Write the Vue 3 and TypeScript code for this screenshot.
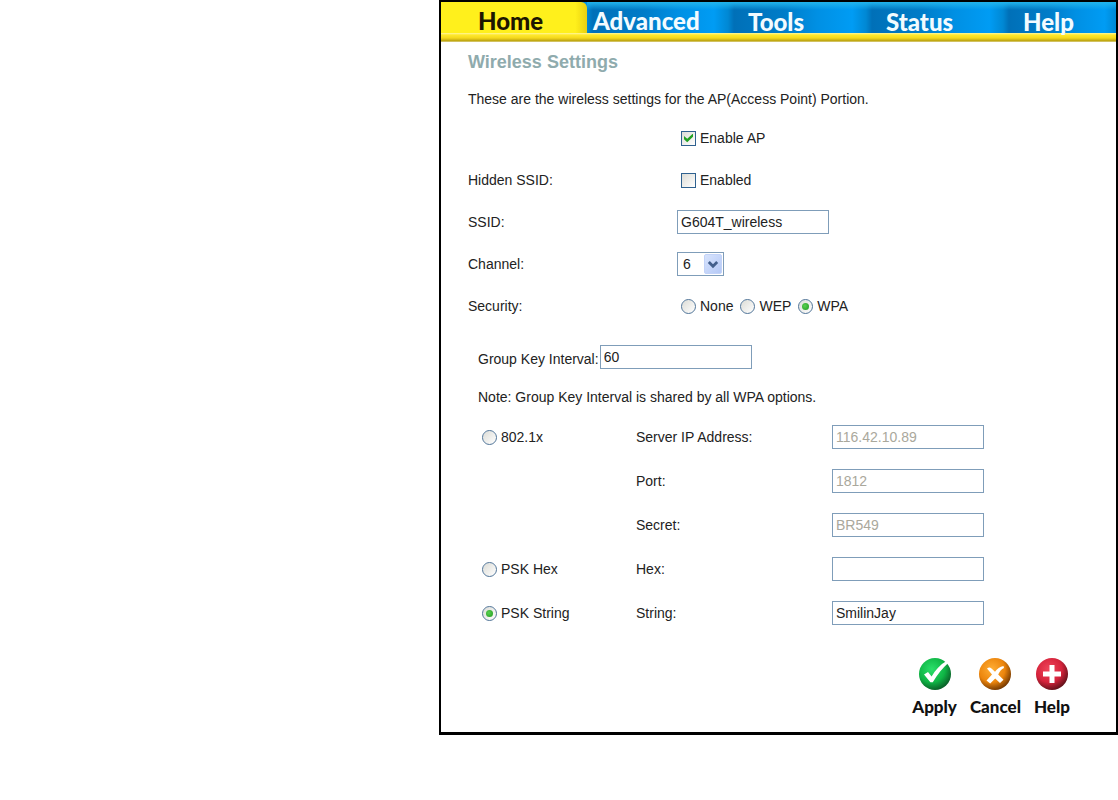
<script setup lang="ts">
import { ref } from 'vue'

interface ServerField {
  id: string
  label: string
  value: string
  mode: string
  option?: string
}

const tabs = ['Home', 'Advanced', 'Tools', 'Status', 'Help']
const enableAp = ref(true)
const hiddenSsid = ref(false)
const ssid = ref('G604T_wireless')
const channel = ref('6')
const channels = ['1', '2', '3', '4', '5', '6', '7', '8', '9', '10', '11']
const security = ref('WPA')
const securityModes = ['None', 'WEP', 'WPA']
const interval = ref('60')
const wpaMode = ref('string')
const fields = ref<ServerField[]>([
  { id: 'server', label: 'Server IP Address:', value: '116.42.10.89', mode: '8021x', option: '802.1x' },
  { id: 'port', label: 'Port:', value: '1812', mode: '8021x' },
  { id: 'secret', label: 'Secret:', value: 'BR549', mode: '8021x' },
  { id: 'hex', label: 'Hex:', value: '', mode: 'hex', option: 'PSK Hex' },
  { id: 'string', label: 'String:', value: 'SmilinJay', mode: 'string', option: 'PSK String' },
])
</script>

<template>
  <div class="page">
    <main class="panel">
      <nav class="tabs">
        <a v-for="(tab, i) in tabs" :key="tab" href="#" class="tab" :class="{ active: i === 0, next: i === 1 }">{{ tab }}</a>
      </nav>
      <div class="band"></div>
      <form class="content" @submit.prevent>
        <h1>Wireless Settings</h1>
        <p class="intro">These are the wireless settings for the AP(Access Point) Portion.</p>

        <div class="row">
          <span></span>
          <label class="choice"><input v-model="enableAp" type="checkbox" />Enable AP</label>
        </div>
        <div class="row">
          <span>Hidden SSID:</span>
          <label class="choice"><input v-model="hiddenSsid" type="checkbox" />Enabled</label>
        </div>
        <div class="row">
          <label for="ssid">SSID:</label>
          <input id="ssid" v-model="ssid" class="text" type="text" />
        </div>
        <div class="row">
          <label for="channel">Channel:</label>
          <div class="drop">
            <select id="channel" v-model="channel">
              <option v-for="c in channels" :key="c">{{ c }}</option>
            </select>
            <svg viewBox="0 0 18 20" width="18" height="20" aria-hidden="true">
              <defs>
                <linearGradient id="arrowFill" x1="0" y1="0" x2="1" y2="1">
                  <stop offset="0" stop-color="#d8e4fd" />
                  <stop offset="1" stop-color="#b4c8f6" />
                </linearGradient>
              </defs>
              <rect x="0.5" y="0.5" width="17" height="19" rx="1.5" fill="url(#arrowFill)" stroke="#c3d3f8" />
              <path d="M4.8 8l4.2 4.2L13.2 8" fill="none" stroke="#435f8c" stroke-width="2.8" />
            </svg>
          </div>
        </div>
        <div class="row">
          <span>Security:</span>
          <div class="modes">
            <label v-for="m in securityModes" :key="m" class="choice">
              <input v-model="security" type="radio" name="security" :value="m" />{{ m }}
            </label>
          </div>
        </div>

        <section class="wpa">
          <div class="interval">
            <label for="interval">Group Key Interval:</label>
            <input id="interval" v-model="interval" class="text" type="text" />
          </div>
          <p class="note">Note: Group Key Interval is shared by all WPA options.</p>
          <div v-for="f in fields" :key="f.id" class="wpa-row">
            <label v-if="f.option" class="choice">
              <input v-model="wpaMode" type="radio" name="wpa" :value="f.mode" />{{ f.option }}
            </label>
            <span v-else></span>
            <label :for="f.id">{{ f.label }}</label>
            <input :id="f.id" v-model="f.value" class="text" type="text" :disabled="f.mode === '8021x' && wpaMode !== '8021x'" />
          </div>
        </section>

        <div class="actions">
          <button type="submit">
            <svg viewBox="0 0 34 34" width="34" height="34" aria-hidden="true">
              <defs>
                <radialGradient id="green" cx="0.4" cy="0.35" r="0.68">
                  <stop offset="0" stop-color="#2be06a" />
                  <stop offset="0.6" stop-color="#0fb545" />
                  <stop offset="1" stop-color="#0a5a26" />
                </radialGradient>
              </defs>
              <circle cx="17" cy="17" r="16" fill="url(#green)" />
              <path d="M6 17.5l4-2.600 3.600 4.600C17.500 13 22 7.500 28.500 4l2 1.800C25 10.500 19.500 17.500 14.800 25.200h-2.400z" fill="#fff" />
            </svg>
            Apply
          </button>
          <button type="button">
            <svg viewBox="0 0 34 34" width="34" height="34" aria-hidden="true">
              <defs>
                <radialGradient id="orange" cx="0.4" cy="0.35" r="0.68">
                  <stop offset="0" stop-color="#ffae35" />
                  <stop offset="0.6" stop-color="#ec850c" />
                  <stop offset="1" stop-color="#6f3500" />
                </radialGradient>
              </defs>
              <circle cx="17" cy="17" r="16" fill="url(#orange)" />
              <path d="M9 11.500q2.500-2 4.500 0l3.500 3.300c2-3 5-5.300 8.500-5.800l.5 2c-2.500 1.200-4.500 3.500-5.800 6.500l5.300 5.200-3.500 3.300-4.800-4.500-5 5-3.700-3 5.500-6z" fill="#fff" />
            </svg>
            Cancel
          </button>
          <button type="button">
            <svg viewBox="0 0 34 34" width="34" height="34" aria-hidden="true">
              <defs>
                <radialGradient id="red" cx="0.4" cy="0.35" r="0.68">
                  <stop offset="0" stop-color="#f0455a" />
                  <stop offset="0.6" stop-color="#d5233b" />
                  <stop offset="1" stop-color="#5c1018" />
                </radialGradient>
              </defs>
              <circle cx="17" cy="17" r="16" fill="url(#red)" />
              <path d="M14.500 8h5v6.500H26v5h-6.500V26h-5v-6.500H8v-5h6.500z" fill="#fff" />
            </svg>
            Help
          </button>
        </div>
      </form>
    </main>
  </div>
</template>

<style>
body {
  background: #fff;
}
</style>

<style scoped>
* {
  box-sizing: border-box;
}
.page {
  display: grid;
  grid-template-columns: 439px minmax(0, 1fr);
  font: 14px/20px "Liberation Sans", Arial, sans-serif;
  color: #222;
}
.panel {
  grid-column: 2;
  border: 2px solid #000;
  border-bottom-width: 3px;
}
.tabs {
  display: grid;
  grid-template-columns: 146fr 141fr 138fr 137fr 113fr;
  background: #0092e4;
}
.tab {
  height: 31px;
  padding: 6px 0 0 20px;
  font: 900 24px/28px Lato, "Open Sans", sans-serif;
  color: #f2fbff;
  text-decoration: none;
  background:
    linear-gradient(#22b4ec, #22b4ec00 8px),
    linear-gradient(90deg, #0088d4, #0070b8 6px, #007cc8 40%, #0090e4 65%, #009cf4 90%, #0088d4);
}
.tab.next {
  padding: 5px 0 0 6px;
}
.tab.active {
  padding: 5px 0 0 37px;
  color: #1c1600;
  background: linear-gradient(90deg, #fff01c 92%, #e8d010);
  border-top-right-radius: 6px;
}
.band {
  height: 9px;
  background: linear-gradient(#fff6a0, #ffe92c 2px, #f4d81c 5px, #b9a010 8px, #e9e3b0);
}
.content {
  padding: 0 27px 15px;
}
h1 {
  margin: 0;
  font-size: 18px;
  line-height: 40px;
  color: #8fabad;
}
p {
  margin: 0;
}
.intro {
  line-height: 35px;
}
.row {
  display: grid;
  grid-template-columns: 209px 1fr;
  align-items: center;
  height: 42px;
}
.choice {
  display: flex;
  align-items: center;
  gap: 4px;
  margin-left: 4px;
}
.modes {
  display: flex;
  gap: 3px;
}
.text {
  width: 152px;
  height: 24px;
  padding: 0 3px;
  border: 1px solid #7f9db9;
  background: #fff;
  font: inherit;
  color: #222;
}
.text:disabled {
  color: #aaa89c;
}
input[type="checkbox"],
input[type="radio"] {
  appearance: none;
  display: grid;
  place-items: center;
  flex: none;
  width: 15px;
  height: 15px;
  margin: 0;
  border: 1px solid #2f618f;
  background: linear-gradient(135deg, #dcdcd6, #fff) padding-box;
}
input[type="radio"] {
  border-color: #4f7396;
  border-radius: 50%;
}
input[type="checkbox"]:checked::before {
  content: "";
  width: 9px;
  height: 9px;
  background: #22a122;
  clip-path: polygon(0 28%, 36% 58%, 100% 0, 100% 36%, 36% 96%, 0 64%);
}
input[type="radio"]:checked::before {
  content: "";
  width: 7px;
  height: 7px;
  border-radius: 50%;
  background: radial-gradient(circle at 40% 40%, #5ad050, #1f9a1f);
}
.drop {
  position: relative;
  width: 47px;
  height: 24px;
}
.drop select {
  appearance: none;
  width: 100%;
  height: 100%;
  padding: 0 5px;
  border: 1px solid #7f9db9;
  border-radius: 0;
  background: #fff;
  font: inherit;
  color: #222;
}
.drop svg {
  position: absolute;
  top: 2px;
  right: 2px;
  pointer-events: none;
}
.wpa {
  padding-left: 10px;
}
.interval {
  display: flex;
  align-items: center;
  gap: 1px;
  height: 60px;
}
.interval label {
  padding-top: 4px;
}
.note {
  margin-bottom: 8px;
}
.wpa-row {
  display: grid;
  grid-template-columns: 158px 196px 1fr;
  align-items: center;
  height: 44px;
}
.actions {
  display: flex;
  justify-content: flex-end;
  gap: 13px;
  padding: 22px 19px 0 0;
}
button {
  display: flex;
  flex-direction: column;
  align-items: center;
  gap: 6px;
  padding: 0;
  border: 0;
  background: none;
  font: 900 17px/20px Lato, "Open Sans", sans-serif;
  color: #111;
}
</style>
